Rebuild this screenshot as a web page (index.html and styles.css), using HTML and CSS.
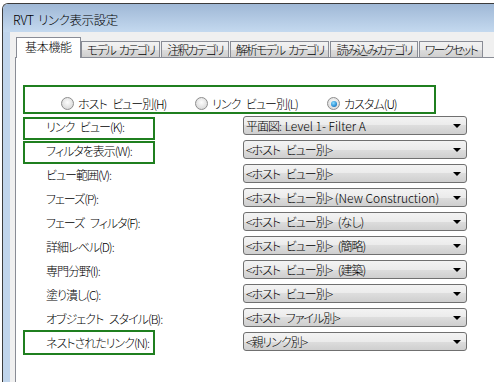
FILE: index.html
```html
<!DOCTYPE html>
<html lang="ja">

<head>
    <meta charset="UTF-8">
    <title>RVT リンク表示設定</title>
    <link rel="stylesheet" href="styles.css">
</head>

<body>
    <div class="window">
        <div class="titlebar">RVT リンク表示設定</div>
        <div class="frame">
            <div class="client">
                <div class="tabs">
                    <div class="tab active">基本機能</div>
                    <div class="tab">モデル カテゴリ</div>
                    <div class="tab">注釈カテゴリ</div>
                    <div class="tab">解析モデル カテゴリ</div>
                    <div class="tab">読み込みカテゴリ</div>
                    <div class="tab">ワークセット</div>
                </div>
                <div class="panel">
                    <div class="radio-group">
                        <label class="radio-item"><span class="radio"></span>ホスト ビュー別(H)</label>
                        <label class="radio-item"><span class="radio"></span>リンク ビュー別(L)</label>
                        <label class="radio-item"><span class="radio checked"></span>カスタム(U)</label>
                    </div>

                    <div class="rows">
                        <div class="row">
                            <div class="label hl">リンク ビュー(K):</div>
                            <div class="combo">平面図<span class="lat">: Level 1- Filter A</span></div>
                        </div>
                        <div class="row">
                            <div class="label hl">フィルタを表示(W):</div>
                            <div class="combo">&lt;ホスト ビュー別&gt;</div>
                        </div>
                        <div class="row">
                            <div class="label">ビュー範囲(V):</div>
                            <div class="combo">&lt;ホスト ビュー別&gt;</div>
                        </div>
                        <div class="row">
                            <div class="label">フェーズ(P):</div>
                            <div class="combo">&lt;ホスト ビュー別&gt;<span class="lat"> (New Construction)</span></div>
                        </div>
                        <div class="row">
                            <div class="label">フェーズ フィルタ(F):</div>
                            <div class="combo">&lt;ホスト ビュー別&gt; (なし)</div>
                        </div>
                        <div class="row">
                            <div class="label">詳細レベル(D):</div>
                            <div class="combo">&lt;ホスト ビュー別&gt; (簡略)</div>
                        </div>
                        <div class="row">
                            <div class="label">専門分野(I):</div>
                            <div class="combo">&lt;ホスト ビュー別&gt; (建築)</div>
                        </div>
                        <div class="row">
                            <div class="label">塗り潰し(C):</div>
                            <div class="combo">&lt;ホスト ビュー別&gt;</div>
                        </div>
                        <div class="row">
                            <div class="label">オブジェクト スタイル(B):</div>
                            <div class="combo">&lt;ホスト ファイル別&gt;</div>
                        </div>
                        <div class="row">
                            <div class="label hl nested">ネストされたリンク(N):</div>
                            <div class="combo">&lt;親リンク別&gt;</div>
                        </div>
                    </div>
                </div>
            </div>
        </div>
    </div>
</body>

</html>
```

FILE: styles.css
```css
body {
    margin: 0;
    background-color: #fff;
    font-family: "Noto Sans CJK JP", "Liberation Sans", sans-serif;
    font-size: 12px;
    font-weight: 300;
    font-feature-settings: "palt";
    letter-spacing: -1px;
    word-spacing: 4px;
    color: #000;
    overflow: hidden;
}

.lat {
    letter-spacing: 0;
    word-spacing: 0;
}

.window {
    margin: 3px 0 0 2px;
    border-left: 1px solid #3c3c3c;
    border-top: 1px solid #3c3c3c;
    border-top-left-radius: 6px;
    overflow: hidden;
    height: 378px;
}

.titlebar {
    height: 28px;
    line-height: 32px;
    padding-left: 10px;
    background: linear-gradient(#9fb8d6, #c4d9ef);
    font-size: 12.5px;
    letter-spacing: -0.4px;
    word-spacing: 2px;
}

.frame {
    background-color: #c0d5ec;
    padding-left: 7px;
    height: 100%;
}

.client {
    background-color: #f0f0f0;
    padding: 6px 0 0 5px;
    height: 100%;
}

.tabs {
    display: flex;
    align-items: flex-end;
    padding-left: 1px;
    height: 19px;
    position: relative;
    z-index: 1;
}

.tab {
    height: 15px;
    line-height: 15px;
    padding: 0 5px;
    margin-left: 1px;
    border: 1px solid #898c95;
    border-bottom: none;
    background: linear-gradient(#f2f2f2, #ebebeb 50%, #dddddd 50%, #cfcfcf);
    white-space: nowrap;
    letter-spacing: -1.9px;
    word-spacing: 3px;
}

.tab.active {
    height: 20px;
    line-height: 18px;
    padding: 0 8px;
    margin: 0 0 -1px 0;
    background: #fff;
    letter-spacing: -0.3px;
}

.tab.active + .tab {
    margin-left: 0;
}

.panel {
    background-color: #fff;
    border-left: 1px solid #898c95;
    border-top: 1px solid #898c95;
    padding: 27px 0 0 7px;
    height: 100%;
}

.radio-group {
    display: grid;
    grid-template-columns: 134px 132px auto;
    align-items: center;
    width: 373px;
    height: 16px;
    padding: 8px 0 1px 36px;
    border: 2px solid #1f7f1f;
}

.radio-item {
    display: flex;
    align-items: center;
    white-space: nowrap;
}

.radio {
    width: 11px;
    height: 11px;
    margin-right: 4px;
    border: 1px solid #8d8d8d;
    border-radius: 50%;
    background: radial-gradient(circle at 50% 40%, #fdfdfd, #e4e4e4 55%, #cfcfcf);
    display: flex;
    align-items: center;
    justify-content: center;
}

.radio.checked::after {
    content: "";
    width: 6px;
    height: 6px;
    border-radius: 50%;
    background: radial-gradient(circle at 40% 35%, #8ee0ff, #2a8fd6 60%, #0f4f8f);
}

.rows {
    margin-top: 2px;
}

.row {
    display: flex;
    align-items: flex-start;
    height: 24px;
}

.label {
    box-sizing: border-box;
    width: 132px;
    height: 23px;
    margin-top: 1px;
    padding-left: 21px;
    line-height: 16px;
    border: 2px solid transparent;
    white-space: nowrap;
}

.label.hl {
    border-color: #1f7f1f;
}

.label.nested {
    height: 25px;
    margin-top: -2px;
    line-height: 22px;
}

.combo {
    position: relative;
    box-sizing: border-box;
    width: 224px;
    height: 19px;
    margin-left: 88px;
    padding-left: 2px;
    line-height: 17px;
    border: 1px solid #707070;
    border-radius: 3px;
    background: linear-gradient(#f3f3f3, #ebebeb 50%, #dddddd 50%, #cfcfcf);
    white-space: nowrap;
}

.combo::after {
    content: "";
    position: absolute;
    right: 5px;
    top: 7px;
    border-left: 4px solid transparent;
    border-right: 4px solid transparent;
    border-top: 4px solid #000;
}
```
